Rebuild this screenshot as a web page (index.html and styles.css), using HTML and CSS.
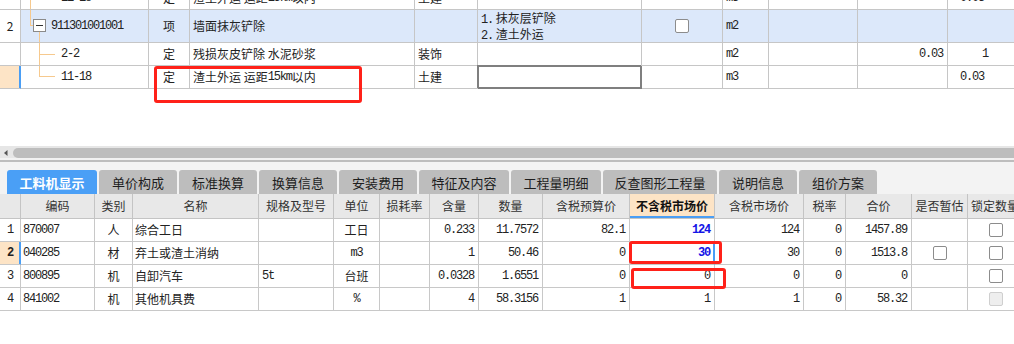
FILE: index.html
```html
<!DOCTYPE html>
<html>
<head>
<meta charset="utf-8">
<link rel="stylesheet" href="styles.css">
</head>
<body>
<div class="page">
  <div class="upper">
    <div class="grid top">
      <div class="row r1">
        <div class="c hd"></div>
        <div class="c code"><svg class="tree" width="40" height="23"><line x1="9.5" y1="0" x2="9.5" y2="23"/></svg><span class="m">11-18</span></div>
        <div class="c ctr">定</div>
        <div class="c">渣土外运 运距<span class="m">15km</span>以内</div>
        <div class="c">土建</div>
        <div class="c"></div>
        <div class="c"></div>
        <div class="c m">m3</div>
        <div class="c"></div>
        <div class="c"></div>
        <div class="c m pl12">0.03</div>
      </div>
      <div class="row r2 sel-row">
        <div class="c hd ctr white">2</div>
        <div class="c code"><svg class="tree" width="30" height="32"><line x1="9.5" y1="0" x2="9.5" y2="15.5"/><line x1="9" y1="15.5" x2="12" y2="15.5"/><line x1="18.5" y1="22" x2="18.5" y2="32"/><rect class="box" x="12.5" y="9.5" width="12" height="12"/><line class="minus" x1="15" y1="15.5" x2="22" y2="15.5"/></svg><span class="m">911301001001</span></div>
        <div class="c ctr">项</div>
        <div class="c">墙面抹灰铲除</div>
        <div class="c"></div>
        <div class="c feat"><span><span class="m">1.</span> 抹灰层铲除</span><span><span class="m">2.</span> 渣土外运</span></div>
        <div class="c ctr"><span class="cb"></span></div>
        <div class="c m">m2</div>
        <div class="c"></div>
        <div class="c"></div>
        <div class="c"></div>
      </div>
      <div class="row r3">
        <div class="c hd"></div>
        <div class="c code"><svg class="tree" width="40" height="22"><line x1="18.5" y1="0" x2="18.5" y2="23"/><line x1="19" y1="11.5" x2="34" y2="11.5"/></svg><span class="m">2-2</span></div>
        <div class="c ctr">定</div>
        <div class="c">残损灰皮铲除 水泥砂浆</div>
        <div class="c">装饰</div>
        <div class="c"></div>
        <div class="c"></div>
        <div class="c m">m2</div>
        <div class="c"></div>
        <div class="c m right">0.03</div>
        <div class="c m pl34">1</div>
      </div>
      <div class="row r3">
        <div class="c hd peach selhd"></div>
        <div class="c code"><svg class="tree" width="40" height="22"><line x1="18.5" y1="0" x2="18.5" y2="10.5"/><line x1="18" y1="10.5" x2="34" y2="10.5"/></svg><span class="m">11-18</span></div>
        <div class="c ctr">定</div>
        <div class="c">渣土外运 运距<span class="m">15km</span>以内</div>
        <div class="c">土建</div>
        <div class="c edit"></div>
        <div class="c"></div>
        <div class="c m">m3</div>
        <div class="c"></div>
        <div class="c"></div>
        <div class="c m pl12">0.03</div>
      </div>
    </div>
    <div class="mark mk1"></div>
  </div>

  <div class="hscroll">
    <svg class="arrow" width="13" height="10"><polygon points="7.5,2 4,5 7.5,8"/></svg>
    <div class="thumb"></div>
  </div>
  <div class="split"></div>

  <div class="tabs">
    <div class="tab active w90">工料机显示</div>
    <div class="tab w78">单价构成</div>
    <div class="tab w78">标准换算</div>
    <div class="tab w78">换算信息</div>
    <div class="tab w78">安装费用</div>
    <div class="tab w90">特征及内容</div>
    <div class="tab w90">工程量明细</div>
    <div class="tab w114">反查图形工程量</div>
    <div class="tab w78">说明信息</div>
    <div class="tab w78">组价方案</div>
  </div>

  <div class="lower">
    <div class="grid bot">
      <div class="row head">
        <div class="c"></div>
        <div class="c ctr">编码</div>
        <div class="c ctr">类别</div>
        <div class="c ctr">名称</div>
        <div class="c ctr">规格及型号</div>
        <div class="c ctr">单位</div>
        <div class="c ctr">损耗率</div>
        <div class="c ctr">含量</div>
        <div class="c ctr">数量</div>
        <div class="c ctr">含税预算价</div>
        <div class="c ctr hot">不含税市场价</div>
        <div class="c ctr">含税市场价</div>
        <div class="c ctr">税率</div>
        <div class="c ctr">合价</div>
        <div class="c ctr">是否暂估</div>
        <div class="c">锁定数量</div>
      </div>
      <div class="row br">
        <div class="c hd ctr m">1</div>
        <div class="c m">870007</div>
        <div class="c ctr">人</div>
        <div class="c">综合工日</div>
        <div class="c"></div>
        <div class="c ctr">工日</div>
        <div class="c"></div>
        <div class="c m right">0.233</div>
        <div class="c m right">11.7572</div>
        <div class="c m right">82.1</div>
        <div class="c m right blue">124</div>
        <div class="c m right">124</div>
        <div class="c m right">0</div>
        <div class="c m right">1457.89</div>
        <div class="c"></div>
        <div class="c lock"><span class="cb"></span></div>
      </div>
      <div class="row br">
        <div class="c hd ctr peach selhd bold m">2</div>
        <div class="c m">040285</div>
        <div class="c ctr">材</div>
        <div class="c">弃土或渣土消纳</div>
        <div class="c"></div>
        <div class="c ctr m">m3</div>
        <div class="c"></div>
        <div class="c m right">1</div>
        <div class="c m right">50.46</div>
        <div class="c m right">0</div>
        <div class="c m right blue selcell">30</div>
        <div class="c m right">30</div>
        <div class="c m right">0</div>
        <div class="c m right">1513.8</div>
        <div class="c ctr"><span class="cb"></span></div>
        <div class="c lock"><span class="cb"></span></div>
      </div>
      <div class="row br">
        <div class="c hd ctr m">3</div>
        <div class="c m">800895</div>
        <div class="c ctr">机</div>
        <div class="c">自卸汽车</div>
        <div class="c m">5t</div>
        <div class="c ctr">台班</div>
        <div class="c"></div>
        <div class="c m right">0.0328</div>
        <div class="c m right">1.6551</div>
        <div class="c m right">0</div>
        <div class="c m right">0</div>
        <div class="c m right">0</div>
        <div class="c m right">0</div>
        <div class="c m right">0</div>
        <div class="c"></div>
        <div class="c lock"><span class="cb"></span></div>
      </div>
      <div class="row br">
        <div class="c hd ctr m">4</div>
        <div class="c m">841002</div>
        <div class="c ctr">机</div>
        <div class="c">其他机具费</div>
        <div class="c"></div>
        <div class="c ctr m">%</div>
        <div class="c"></div>
        <div class="c m right">4</div>
        <div class="c m right">58.3156</div>
        <div class="c m right">1</div>
        <div class="c m right">1</div>
        <div class="c m right">1</div>
        <div class="c m right">0</div>
        <div class="c m right">58.32</div>
        <div class="c"></div>
        <div class="c lock"><span class="cb off"></span></div>
      </div>
    </div>
    <div class="mark mk2"></div>
    <div class="mark mk3"></div>
  </div>
</div>
</body>
</html>
```

FILE: styles.css
```css
* { box-sizing: border-box; }

body {
  margin: 0;
  background: #ffffff;
  font-family: "Noto Sans CJK SC", "Noto Sans", sans-serif;
  font-size: 12px;
  color: #222222;
}

.page {
  width: 1014px;
  height: 344px;
  overflow: hidden;
  background: #ffffff;
}

/* ---------- upper grid ---------- */
.upper {
  position: relative;
  height: 146px;
  overflow: hidden;
}

.top {
  margin-top: -14px;
}

.row {
  display: grid;
}

.top .row {
  grid-template-columns: 21px 128px 41px 225px 63px 164px 81px 46px 89px 90px 80px;
}

.top .r1 { height: 24px; }
.top .r2 { height: 33px; }
.top .r3 { height: 23px; }

.c {
  border-right: 1px solid #c6c6c6;
  border-bottom: 1px solid #c6c6c6;
  display: flex;
  align-items: center;
  padding: 0 3px;
  white-space: nowrap;
  overflow: hidden;
  line-height: 14px;
}

.m {
  font-family: "Liberation Mono", monospace;
  letter-spacing: -1.2px;
}

.ctr { justify-content: center; }
.right { justify-content: flex-end; padding-right: 4px; }
.pl12 { padding-left: 12px; }
.pl34 { padding-left: 34px; }
.bold { font-weight: bold; }

.sel-row .c { background: #dce8fa; }
.sel-row .c.white { background: #ffffff; }

.hd { padding: 0; }
.peach { background: #fde4c6; }
.selhd {
  border-right-color: #4a9ef5;
  box-shadow: inset -1px 0 0 #4a9ef5;
}

.code { padding: 0; }
.code .m { margin-left: 0; }
.r2 .code .m { margin-left: 0; }

.tree {
  flex: none;
  align-self: flex-start;
}
.tree line {
  stroke: #f6c98e;
  stroke-width: 1;
}
.tree .box {
  fill: #ffffff;
  stroke: #8a8a8a;
  stroke-width: 1;
}
.tree .minus {
  stroke: #333333;
}

.feat {
  flex-direction: column;
  align-items: flex-start;
  justify-content: center;
  padding-left: 3px;
  padding-top: 1px;
}

.edit {
  border-right-color: #7f7f7f;
  border-bottom-color: #7f7f7f;
  box-shadow: inset 0 0 0 1px #7f7f7f, -1px -1px 0 0 #7f7f7f;
}

.cb {
  display: inline-block;
  width: 14px;
  height: 14px;
  border: 1px solid #8c8c8c;
  border-radius: 2px;
  background: #ffffff;
}
.cb.off {
  background: #eeeeee;
  border-color: #cfcfcf;
}

/* ---------- red annotation boxes ---------- */
.mark {
  position: absolute;
  border: 3px solid #ff2119;
  border-radius: 3px;
}
.mk1 { left: 154px; top: 66px; width: 208px; height: 37px; }
.mk2 { left: 629px; top: 47px; width: 93px; height: 23px; }
.mk3 { left: 631px; top: 74px; width: 95px; height: 21px; }

/* ---------- scrollbar ---------- */
.hscroll {
  height: 12px;
  padding-top: 2px;
  background: #e6e6e6;
  display: flex;
}
.arrow {
  flex: none;
}
.arrow polygon { fill: #555555; }
.thumb {
  flex: 1;
  height: 10px;
  background: #bdbdbd;
  border-radius: 5px 0 0 5px;
}
.split {
  height: 4px;
  background: #f2f2f2;
  border-bottom: 2px solid #bdbdbd;
}

/* ---------- tabs ---------- */
.tabs {
  height: 32px;
  background: #f3f3f3;
  padding: 8px 0 0 7px;
  display: flex;
  gap: 2px;
}
.tab {
  height: 24px;
  background: #bdbdbd;
  border-radius: 3px 3px 0 0;
  display: flex;
  align-items: center;
  justify-content: center;
  font-size: 13px;
  color: #1e1e1e;
  flex: none;
}
.tab.active {
  background: #4a9ff6;
  color: #ffffff;
  font-weight: bold;
}
.w90 { width: 90px; }
.w78 { width: 78px; }
.w114 { width: 114px; }

/* ---------- lower grid ---------- */
.lower {
  position: relative;
}

.bot .row {
  grid-template-columns: 21px 74px 38px 126px 75px 46px 50px 49px 64px 87px 85px 89px 42px 66px 56px 80px;
}
.bot .head { height: 25px; }
.bot .head .c {
  background: #e8e8e8;
  color: #333333;
  border-color: #c4c4c4;
}
.bot .head .hot {
  background: #fde4c6;
  font-weight: bold;
  color: #111111;
  box-shadow: inset 0 -2px 0 #4a9ef5;
}
.bot .br { height: 23px; }
.bot .br .c { border-color: #c8c8c8; }
.bot .br .hd { border-right-color: #c8c8c8; }
.bot .br .selhd { border-right-color: #4a9ef5; }
.bot .br .c:nth-child(2),
.bot .br .c:nth-child(4) { padding-left: 2px; }

.blue {
  color: #1414e6;
  font-weight: bold;
}
.selcell {
  border-right-color: #4a9ef5 !important;
  box-shadow: inset -1px 0 0 #4a9ef5;
}
.lock {
  padding-left: 21px;
}
```
